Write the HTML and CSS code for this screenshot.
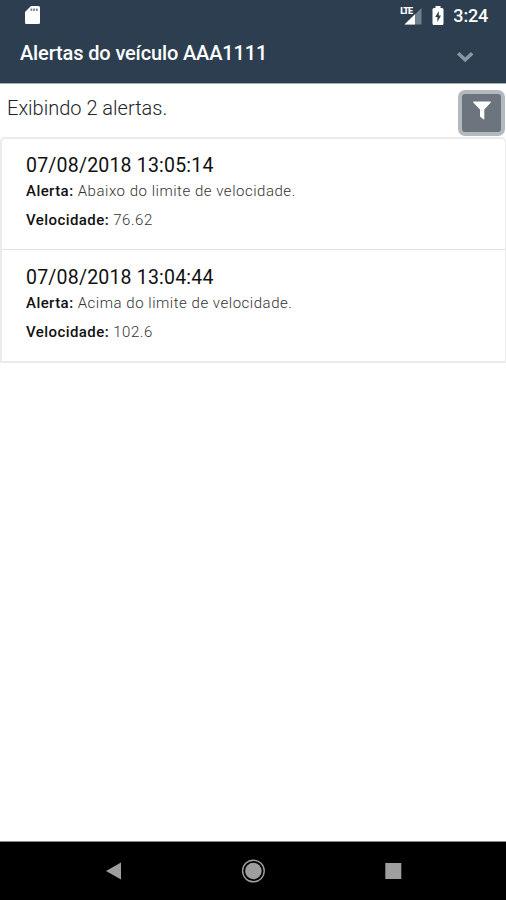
FILE: index.html
```html
<!DOCTYPE html>
<html lang="pt-BR">
<head>
    <meta charset="UTF-8">
    <meta name="viewport" content="width=device-width, initial-scale=1.0">
    <title>Alertas do veículo</title>
    <link rel="stylesheet" href="styles.css">
</head>
<body>
    <header class="header">
        <div class="status">
            <svg class="sdcard" width="16" height="20" viewBox="0 0 16 20">
                <path d="M6 1h7.500q1.500 0 1.500 1.500v15q0 1.500-1.500 1.500h-12Q0 19 0 17.500V7z" fill="#fff"/>
                <path d="M5.500 3.500h1.800v2.500H5.500zM8.200 3.500H10v2.500H8.200zM10.900 3.500h1.800v2.500h-1.800z" fill="#7b8794"/>
            </svg>
            <div class="signal">
                <span class="lte">LTE</span>
                <svg width="18" height="17" viewBox="0 0 18 17">
                    <path d="M17.500 0v16.500H.5z" fill="#73808d"/>
                    <path d="M11 6.300v10.200H.5z" fill="#fff"/>
                </svg>
            </div>
            <svg class="battery" width="12" height="20" viewBox="0 0 12 20">
                <path d="M3.500 0h5v2H10q1.500 0 1.500 1.500v14Q11.500 19 10 19H2Q.5 19 .5 17.500v-14Q.5 2 2 2h1.500z" fill="#fff"/>
                <path d="M6.800 5L3.200 11h2.200v5L9 9.500H6.800z" fill="#2c3e50"/>
            </svg>
            <span class="clock">3:24</span>
        </div>
        <div class="title-bar">
            <h1 class="title">Alertas do veículo AAA1111</h1>
            <svg width="18" height="12" viewBox="0 0 18 12">
                <path d="M2.200 2.200L9.200 8.800l7-6.600" fill="none" stroke="#8798a3" stroke-width="3.600"/>
            </svg>
        </div>
    </header>

    <main class="content">
        <div class="toolbar">
            <p class="count">Exibindo 2 alertas.</p>
            <button class="filter" aria-label="Filtrar">
                <svg width="18" height="19" viewBox="0 0 18 19">
                    <path d="M.7.500h16.600q1 .3.300 1.300L11.300 8.500v9.300q-.3.900-1.100.4L7 15.500V8.500L.4 1.800Q-.2.900.7.500z" fill="#fff"/>
                </svg>
            </button>
        </div>
        <ul class="list">
            <li class="item">
                <h2 class="date">07/08/2018 13:05:14</h2>
                <p class="line"><b>Alerta:</b> Abaixo do limite de velocidade.</p>
                <p class="line"><b>Velocidade:</b> 76.62</p>
            </li>
            <li class="item">
                <h2 class="date">07/08/2018 13:04:44</h2>
                <p class="line"><b>Alerta:</b> Acima do limite de velocidade.</p>
                <p class="line"><b>Velocidade:</b> 102.6</p>
            </li>
        </ul>
    </main>

    <nav class="navbar">
        <svg width="18" height="20" viewBox="0 0 18 20">
            <path d="M17 1.500v17L2 10z" fill="#9e9e9e"/>
        </svg>
        <svg width="24" height="24" viewBox="0 0 24 24">
            <circle cx="12.400" cy="12" r="10.800" fill="none" stroke="#9e9e9e" stroke-width="1.400"/>
            <circle cx="12.400" cy="12" r="8.300" fill="#9e9e9e"/>
        </svg>
        <svg width="18" height="18" viewBox="0 0 18 18">
            <rect x="1.300" y="1" width="16" height="16" fill="#9e9e9e"/>
        </svg>
    </nav>
</body>
</html>
```
FILE: styles.css
```css
*{
    box-sizing: border-box;
}
body{
    margin: 0;
    height: 100vh;
    display: flex;
    flex-direction: column;
    background-color: #fff;
    font-family: Roboto, "Liberation Sans", sans-serif;
    color: #212529;
}
h1,h2,p,ul{
    margin: 0;
    padding: 0;
    font-weight: 400;
}
svg{
    display: block;
    flex: none;
}
.header{
    height: 84px;
    background-color: #2c3e50;
    border-bottom: 1px solid #a5adb5;
    color: #fff;
}
.status{
    height: 32px;
    display: flex;
    align-items: center;
    padding: 0 18px 0 25px;
}
.sdcard{
    margin-right: auto;
    margin-top: -2px;
}
.signal{
    display: flex;
    align-items: flex-end;
    position: relative;
    margin-right: 10px;
}
.lte{
    position: absolute;
    left: -4px;
    top: -1px;
    font-size: 9px;
    line-height: 9px;
    font-weight: 900;
    letter-spacing: -1px;
}
.battery{
    margin-top: -1px;
    margin-right: 9px;
}
.clock{
    font-size: 18px;
    font-weight: 500;
    line-height: 32px;
    letter-spacing: -0.2px;
}
.title-bar{
    height: 42px;
    display: flex;
    align-items: center;
    justify-content: space-between;
    padding: 0 32px 0 20px;
}
.title-bar svg{
    margin-top: 7px;
}
.title{
    font-size: 20px;
    font-weight: 500;
    line-height: 24px;
    letter-spacing: -0.14px;
}
.content{
    flex: 1;
}
.toolbar{
    height: 53px;
    display: flex;
    justify-content: space-between;
    padding: 6px 1px 0 7px;
}
.count{
    font-size: 20px;
    font-weight: 300;
    line-height: 36px;
}
.filter{
    width: 47px;
    height: 46px;
    display: flex;
    align-items: center;
    justify-content: center;
    padding: 0 0 5px 0;
    border: 4px solid #b4b9bd;
    border-radius: 7px;
    background-color: #6c757d;
}
.list{
    list-style: none;
    border: 2px solid #ebebeb;
    border-right-width: 1px;
    border-radius: 5px 5px 0 0;
}
.item{
    height: 110px;
    padding: 15px 24px 0;
}
.item + .item{
    height: 112px;
    padding-top: 16px;
    border-top: 1px solid #e2e2e2;
}
.date{
    font-size: 19.5px;
    line-height: 24px;
    letter-spacing: 0.2px;
    color: #111;
}
.line{
    font-size: 15px;
    font-weight: 300;
    line-height: 20px;
    letter-spacing: 0.52px;
    margin-top: 3px;
    color: #333;
}
.line + .line{
    margin-top: 9px;
}
.line b{
    font-weight: 500;
    letter-spacing: 0.43px;
    color: #111;
}
.navbar{
    height: 59px;
    display: flex;
    align-items: center;
    justify-content: space-between;
    padding: 0 104px;
    border-top: 1px solid #8a8a8a;
    background-color: #000;
}
```
